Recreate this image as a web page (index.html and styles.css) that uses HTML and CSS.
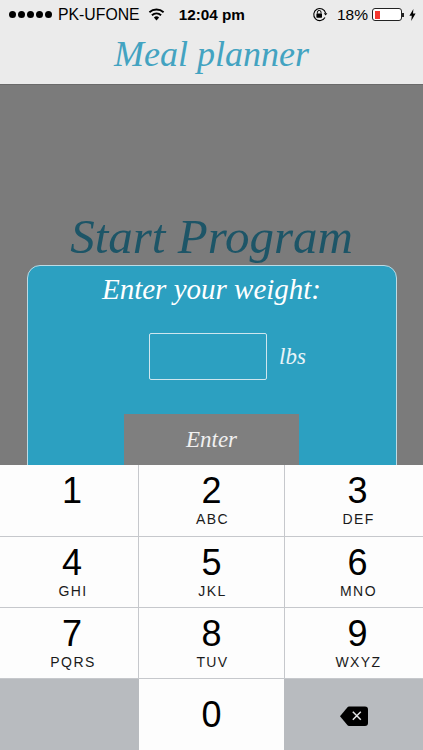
FILE: index.html
```html
<!DOCTYPE html>
<html lang="en">
<head>
<meta charset="utf-8">
<title>Meal planner</title>
<link rel="stylesheet" href="styles.css">
</head>
<body>
<div class="app">
  <header class="top">
    <div class="status">
      <div class="status-left">
        <span class="dots"><i></i><i></i><i></i><i></i><i></i></span>
        <span class="carrier">PK-UFONE</span>
        <svg class="wifi" width="17" height="13" viewBox="0 0 17 13"><path d="M8.5 12.6 5.9 9.4a4 4 0 0 1 5.2 0z" fill="#000"/><path d="M3.9 7.2a7 7 0 0 1 9.2 0M1.4 4.2a10.8 10.8 0 0 1 14.2 0" fill="none" stroke="#000" stroke-width="1.9"/></svg>
      </div>
      <span class="clock">12:04 pm</span>
      <div class="status-right">
        <svg class="lock" width="16" height="15" viewBox="0 0 16 15"><path d="M13.6 6.2A6 6 0 1 0 13 10.5" fill="none" stroke="#000" stroke-width="1.1"/><path d="M11.8 6.2h3.6l-1.8 2.2z" fill="#000"/><rect x="4.4" y="6.4" width="5.6" height="4.3" rx=".6" fill="#000"/><path d="M5.4 6.6V5.2a1.8 1.8 0 0 1 3.6 0v1.4" fill="none" stroke="#000" stroke-width="1"/></svg>
        <span class="pct">18%</span>
        <span class="battery"><span class="charge"></span></span>
        <span class="nub"></span>
        <svg class="bolt" width="7" height="12" viewBox="0 0 7 12"><path d="M4.4 0 .4 6.8h2.4L2.2 12l4.4-7.4H4z" fill="#000"/></svg>
      </div>
    </div>
    <h1 class="app-title">Meal planner</h1>
  </header>
  <main class="content">
    <h2 class="program">Start Program</h2>
    <section class="card">
      <h3 class="prompt">Enter your weight:</h3>
      <div class="weight-row">
        <div class="field"></div>
        <span class="unit">lbs</span>
      </div>
      <div class="enter">Enter</div>
    </section>
  </main>
  <div class="keypad">
    <div class="key left"><b>1</b></div>
    <div class="key"><b>2</b><small>ABC</small></div>
    <div class="key right"><b>3</b><small>DEF</small></div>
    <div class="key left"><b>4</b><small>GHI</small></div>
    <div class="key"><b>5</b><small>JKL</small></div>
    <div class="key right"><b>6</b><small>MNO</small></div>
    <div class="key left"><b>7</b><small>PQRS</small></div>
    <div class="key"><b>8</b><small>TUV</small></div>
    <div class="key right"><b>9</b><small>WXYZ</small></div>
    <div class="key dark"></div>
    <div class="key zero"><b>0</b></div>
    <div class="key dark icon">
      <svg width="30" height="22" viewBox="0 0 30 22"><path d="M10 1.500H26a3 3 0 0 1 3 3V18a3 3 0 0 1-3 3H10a2 2 0 0 1-1.500-.7L1 11.300 8.500 2.200A2 2 0 0 1 10 1.500z" fill="#000"/><path d="M13.800 6.800l8 8M21.800 6.800l-8 8" stroke="#e4e5e7" stroke-width="1.500"/></svg>
    </div>
  </div>
</div>
</body>
</html>
```
FILE: styles.css
```css
* { box-sizing: border-box; }
html, body { margin: 0; padding: 0; }
body { font-family: "Liberation Sans", Arial, sans-serif; background: #7b7b7b; }
.app { width: 423px; height: 750px; display: flex; flex-direction: column; overflow: hidden; }
.top { height: 85px; flex: none; background: #ebebeb; border-bottom: 1px solid #6a6a6a; padding-top: 3px; }
.status { height: 23px; display: flex; align-items: center; padding: 0 7px 0 9px; position: relative; color: #000; font-size: 15px; }
.status-left { display: flex; align-items: center; }
.dots { display: flex; gap: 2px; margin-right: 6px; }
.dots i { width: 7px; height: 7px; border-radius: 50%; background: #000; display: block; }
.carrier { font-size: 15.800px; margin-right: 8px; }
.clock { margin-left: 14px; font-weight: 700; font-size: 15.300px; }
.status-right { margin-left: auto; display: flex; align-items: center; }
.lock { margin-right: 9px; }
.pct { font-size: 15.500px; margin-right: 4px; }
.battery { width: 30px; height: 13px; border: 1px solid #222; border-radius: 3px; background: #fff; padding: 1.500px; display: block; }
.charge { display: block; width: 5px; height: 100%; background: #f5372f; }
.nub { width: 2px; height: 4px; background: #222; margin-right: 5px; }
.bolt { display: block; }
.app-title { margin: 3px 0 0; text-align: center; font: italic 400 36px/50px "Liberation Serif", serif; color: #43a3c1; }
.content { height: 380px; flex: none; overflow: hidden; background: #7b7b7b; padding-top: 124px; }
.program { margin: 0; text-align: center; font: italic 400 49px/56px "Liberation Serif", serif; color: #1d5567; height: 56px; }
.card { width: 370px; height: 220px; margin: 0 0 0 26.500px; background: #2ca0c1; border: 1px solid #bcdbe5; border-radius: 13px; }
.prompt { margin: 0; height: 47px; text-align: center; font: italic 400 29px/46px "Liberation Serif", serif; color: #fff; }
.weight-row { display: flex; align-items: center; margin: 20px 0 0 121.500px; }
.field { width: 118px; height: 47px; border: 1px solid #cfe6ee; border-radius: 2px; }
.unit { margin-left: 12px; font: italic 400 23px/30px "Liberation Serif", serif; color: #e8f4f8; }
.enter { width: 175px; height: 60px; margin: 34px 0 0 96.500px; background: #7f7f7f; text-align: center; font: italic 400 23px/51px "Liberation Serif", serif; color: #f0f0f0; }
.keypad { flex: 1; display: grid; grid-template-columns: 139px 145px 139px; grid-template-rows: 72px 71px 71px 71px; background: #c6c8cc; }
.key { background: #fdfdfd; border-bottom: 1px solid #c6c8cc; display: flex; flex-direction: column; align-items: center; color: #000; padding-top: 4px; }
.key.left { border-right: 1px solid #c6c8cc; padding-left: 6px; }
.key.right { border-left: 1px solid #c6c8cc; padding-left: 7px; }
.key b { font-weight: 400; font-size: 36px; line-height: 44px; height: 44px; }
.key small { font-size: 14px; line-height: 16px; letter-spacing: 1.400px; margin: -2px 0 0 2px; color: #1a1a1a; }
.key.dark { background: #b8bbbf; border: 0; }
.key.zero { border: 0; padding-top: 14px; }
.key.icon { padding-top: 26px; padding-left: 0; }
```
